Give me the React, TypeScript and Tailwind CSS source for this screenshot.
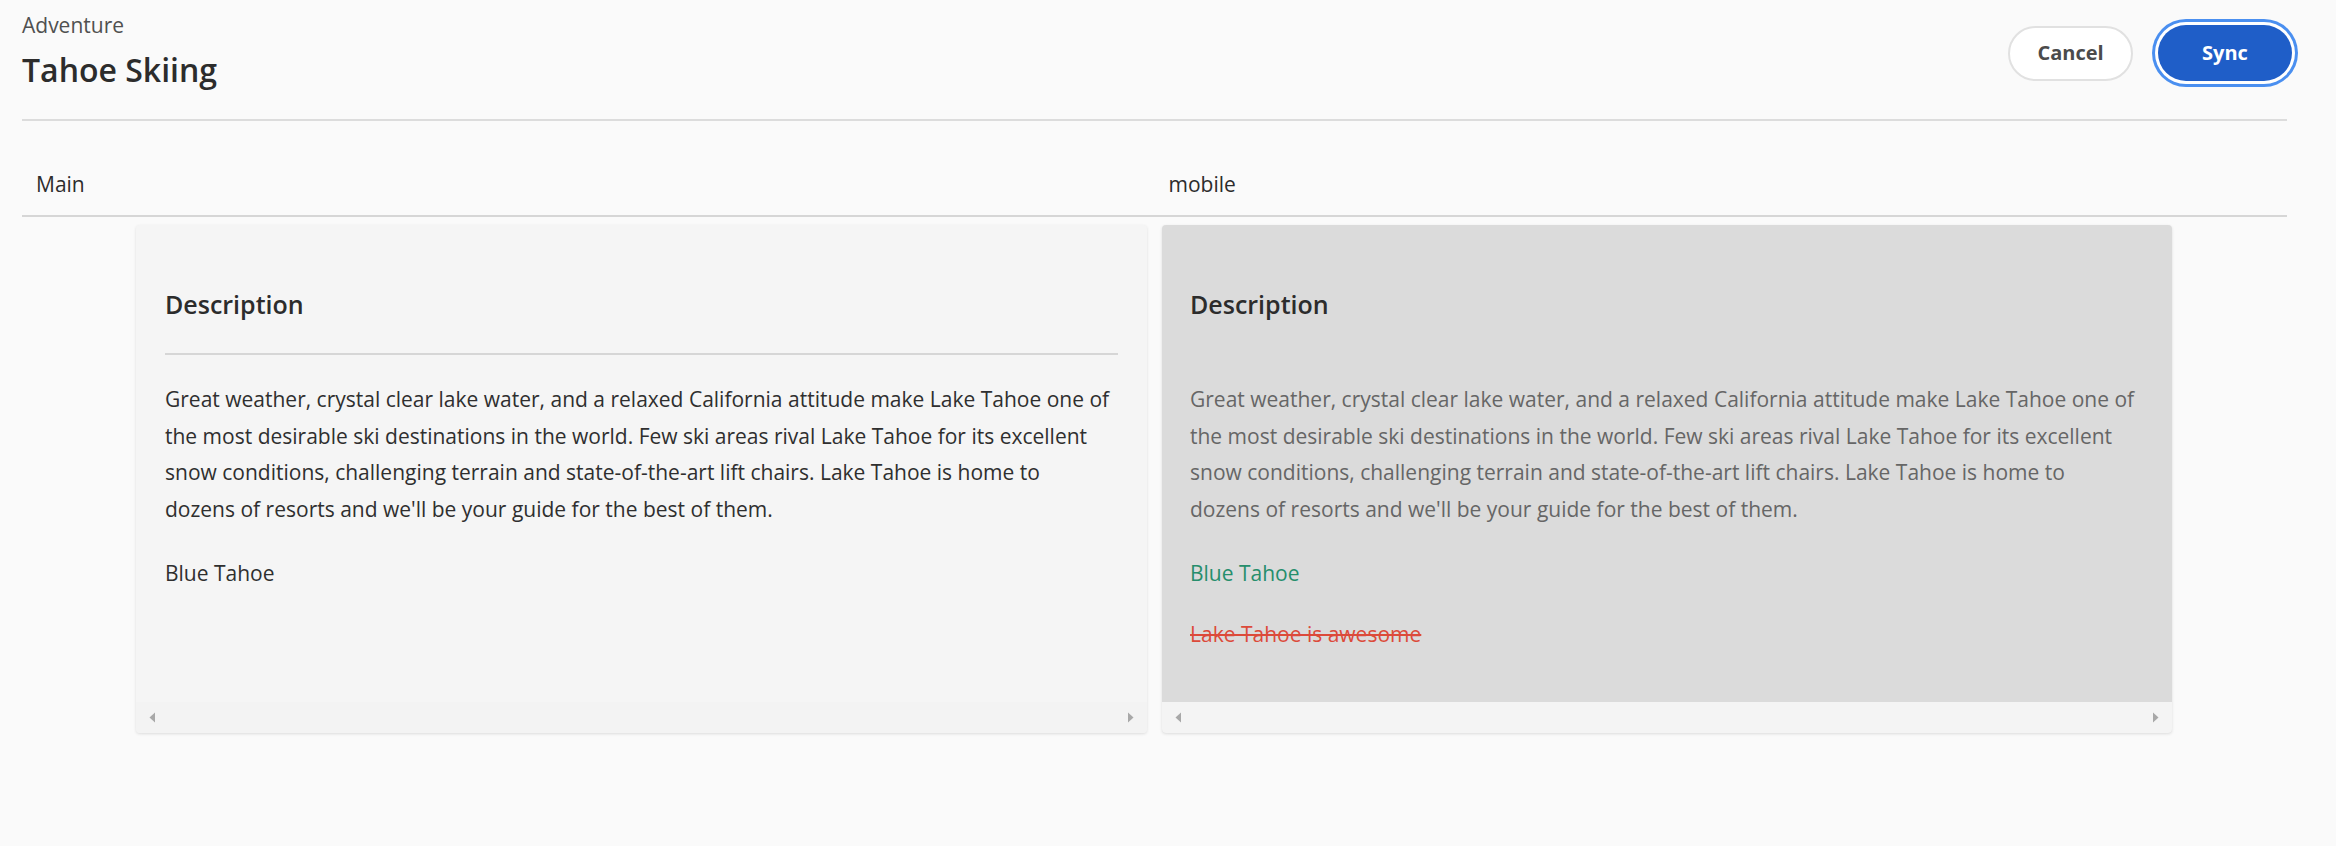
import * as React from 'react'

const bodyLines = [
  'Great weather, crystal clear lake water, and a relaxed California attitude make Lake Tahoe one of',
  'the most desirable ski destinations in the world. Few ski areas rival Lake Tahoe for its excellent',
  'snow conditions, challenging terrain and state-of-the-art lift chairs. Lake Tahoe is home to',
  "dozens of resorts and we'll be your guide for the best of them.",
]

const ScrollTrack = ({ className }: { className: string }) => (
  <div className={`h-[31px] flex items-center justify-between px-[13px] rounded-b-[4px] ${className}`}>
    <svg width="7" height="11" viewBox="0 0 7 11">
      <path d="M6 0.5 L0.5 5.5 L6 10.5 Z" fill="#a8a8a8" />
    </svg>
    <svg width="7" height="11" viewBox="0 0 7 11">
      <path d="M1 0.5 L6.5 5.5 L1 10.5 Z" fill="#a8a8a8" />
    </svg>
  </div>
)

interface ICardProps {
  variant: 'main' | 'mobile'
}

const Card: React.FC<ICardProps> = ({ variant }) => {
  const isMobile = variant === 'mobile'

  return (
    <div
      className={`h-[508px] flex flex-col rounded-[4px] shadow-[0_1px_3px_rgba(0,0,0,0.12)] ${
        isMobile ? 'w-[1010px] bg-[#dbdbdb]' : 'w-[1011px] bg-[#f5f5f5]'
      }`}
    >
      <div className={`flex-1 pt-[62px] ${isMobile ? 'px-[28px]' : 'px-[29px]'}`}>
        <div className="text-[25px] leading-[34px] font-semibold text-[#2c2c2c]">Description</div>
        <div className={`mt-[32px] h-[2px] ${isMobile ? 'bg-transparent' : 'bg-[#d6d6d6]'}`} />
        <div
          className={`mt-[26px] text-[21px] leading-[36.6px] ${
            isMobile ? 'text-[#666666]' : 'text-[#2f2f2f]'
          }`}
        >
          {bodyLines.map(line => (
            <span key={line} className="block whitespace-nowrap">
              {line}
            </span>
          ))}
        </div>
        <div
          className={`mt-[28px] text-[21px] leading-[36.6px] ${
            isMobile ? 'text-[#268e6c]' : 'text-[#2f2f2f]'
          }`}
        >
          Blue Tahoe
        </div>
        {isMobile && (
          <div className="mt-[24px] text-[21px] leading-[36.6px] text-[#dc4a3a] line-through">
            Lake Tahoe is awesome
          </div>
        )}
      </div>
      <ScrollTrack className={isMobile ? 'bg-[#f4f4f4]' : 'bg-[#f3f3f3]'} />
    </div>
  )
}

export default function App() {
  return (
    <div className="w-full min-h-screen bg-[#fafafa] font-['Open_Sans',sans-serif]">
      {/* Header */}
      <div className="flex justify-between items-start pl-[22px] pr-[44px]">
        <div className="pt-[12px]">
          <div className="text-[21px] leading-[26px] text-[#505050]">Adventure</div>
          <div className="mt-[12px] text-[32px] leading-[40px] font-semibold text-[#2c2c2c]">
            Tahoe Skiing
          </div>
        </div>
        <div className="flex items-center gap-[25px] pt-[25px]">
          <button className="h-[55px] w-[125px] rounded-full border-2 border-[#e1e1e1] bg-white text-[20px] font-bold text-[#4b4b4b]">
            Cancel
          </button>
          <button className="h-[56px] w-[134px] rounded-full bg-[#1f5ec8] text-[20px] font-bold text-white ring-[3px] ring-[#4a8ff0] ring-offset-[3px] ring-offset-white">
            Sync
          </button>
        </div>
      </div>
      <div className="ml-[22px] mr-[49px] mt-[29px] h-[2px] bg-[#dcdcdc]" />

      {/* Tabs */}
      <div className="ml-[22px] mr-[49px] grid grid-cols-2 pt-[49px] pb-[17px]">
        <div className="px-[14px] text-[21px] leading-[28px] text-[#2c2c2c]">Main</div>
        <div className="px-[14px] text-[21px] leading-[28px] text-[#2c2c2c]">mobile</div>
      </div>
      <div className="ml-[22px] mr-[49px] h-[2px] bg-[#d6d6d6]" />

      {/* Cards */}
      <div className="flex gap-[15px] pl-[136px] mt-[8px]">
        <Card variant="main" />
        <Card variant="mobile" />
      </div>
    </div>
  )
}
